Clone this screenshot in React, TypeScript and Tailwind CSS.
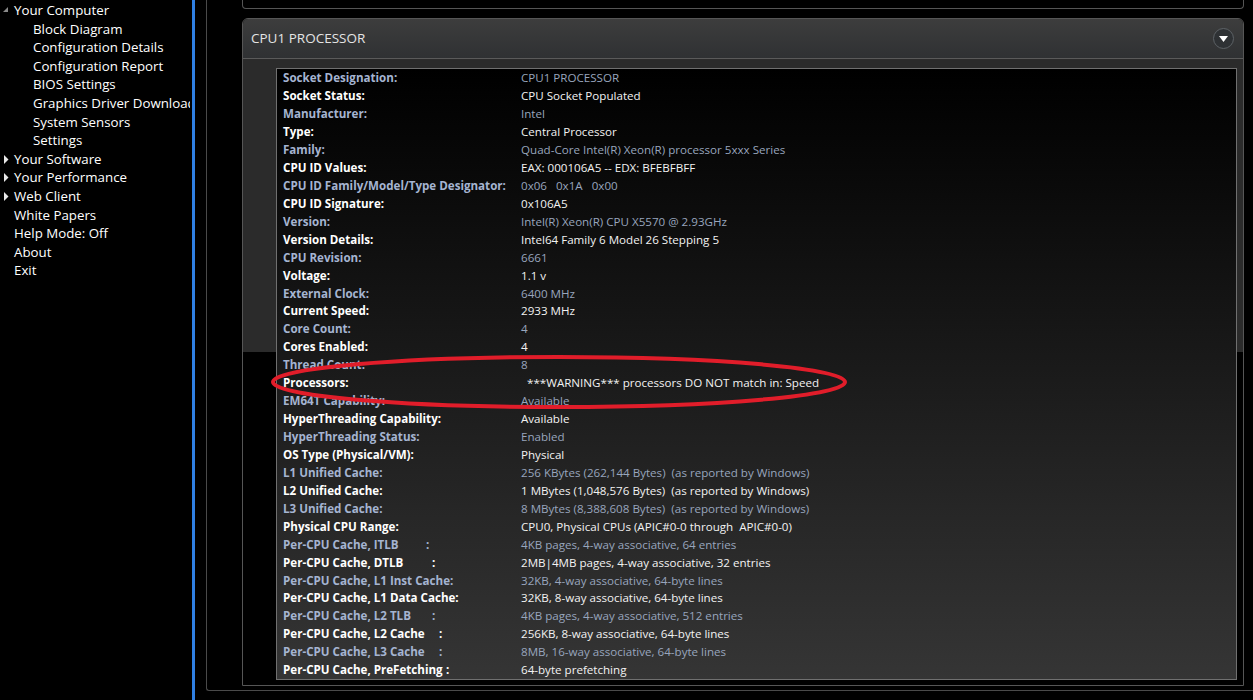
import React from 'react'

type Row = { label: string; value: string; colonW?: string }

// Rows of the processor detail table; odd rows are the blue-grey ones
const rows: Row[] = [
  { label: 'Socket Designation:', value: 'CPU1 PROCESSOR' },
  { label: 'Socket Status:', value: 'CPU Socket Populated' },
  { label: 'Manufacturer:', value: 'Intel' },
  { label: 'Type:', value: 'Central Processor' },
  { label: 'Family:', value: 'Quad-Core Intel(R) Xeon(R) processor 5xxx Series' },
  { label: 'CPU ID Values:', value: 'EAX: 000106A5 -- EDX: BFEBFBFF' },
  { label: 'CPU ID Family/Model/Type Designator:', value: '0x06   0x1A   0x00' },
  { label: 'CPU ID Signature:', value: '0x106A5' },
  { label: 'Version:', value: 'Intel(R) Xeon(R) CPU X5570 @ 2.93GHz' },
  { label: 'Version Details:', value: 'Intel64 Family 6 Model 26 Stepping 5' },
  { label: 'CPU Revision:', value: '6661' },
  { label: 'Voltage:', value: '1.1 v' },
  { label: 'External Clock:', value: '6400 MHz' },
  { label: 'Current Speed:', value: '2933 MHz' },
  { label: 'Core Count:', value: '4' },
  { label: 'Cores Enabled:', value: '4' },
  { label: 'Thread Count:', value: '8' },
  { label: 'Processors:', value: '  ***WARNING*** processors DO NOT match in: Speed' },
  { label: 'EM64T Capability:', value: 'Available' },
  { label: 'HyperThreading Capability:', value: 'Available' },
  { label: 'HyperThreading Status:', value: 'Enabled' },
  { label: 'OS Type (Physical/VM):', value: 'Physical' },
  { label: 'L1 Unified Cache:', value: '256 KBytes (262,144 Bytes)  (as reported by Windows)' },
  { label: 'L2 Unified Cache:', value: '1 MBytes (1,048,576 Bytes)  (as reported by Windows)' },
  { label: 'L3 Unified Cache:', value: '8 MBytes (8,388,608 Bytes)  (as reported by Windows)' },
  { label: 'Physical CPU Range:', value: 'CPU0, Physical CPUs (APIC#0-0 through  APIC#0-0)' },
  { label: 'Per-CPU Cache, ITLB', colonW: 'w-[143px]', value: '4KB pages, 4-way associative, 64 entries' },
  { label: 'Per-CPU Cache, DTLB', colonW: 'w-[149px]', value: '2MB|4MB pages, 4-way associative, 32 entries' },
  { label: 'Per-CPU Cache, L1 Inst Cache:', value: '32KB, 4-way associative, 64-byte lines' },
  { label: 'Per-CPU Cache, L1 Data Cache:', value: '32KB, 8-way associative, 64-byte lines' },
  { label: 'Per-CPU Cache, L2 TLB', colonW: 'w-[149px]', value: '4KB pages, 4-way associative, 512 entries' },
  { label: 'Per-CPU Cache, L2 Cache', colonW: 'w-[156px]', value: '256KB, 8-way associative, 64-byte lines' },
  { label: 'Per-CPU Cache, L3 Cache', colonW: 'w-[156px]', value: '8MB, 16-way associative, 64-byte lines' },
  { label: 'Per-CPU Cache, PreFetching', colonW: 'w-[163px]', value: '64-byte prefetching' },
]

type NavItem = { text: string; child?: boolean; icon?: 'open' | 'closed' }

const nav: NavItem[] = [
  { text: 'Your Computer', icon: 'open' },
  { text: 'Block Diagram', child: true },
  { text: 'Configuration Details', child: true },
  { text: 'Configuration Report', child: true },
  { text: 'BIOS Settings', child: true },
  { text: 'Graphics Driver Download', child: true },
  { text: 'System Sensors', child: true },
  { text: 'Settings', child: true },
  { text: 'Your Software', icon: 'closed' },
  { text: 'Your Performance', icon: 'closed' },
  { text: 'Web Client', icon: 'closed' },
  { text: 'White Papers' },
  { text: 'Help Mode: Off' },
  { text: 'About' },
  { text: 'Exit' },
]

const NavIcon: React.FC<{ kind?: 'open' | 'closed' }> = ({ kind }) => {
  if (kind === 'open') {
    return (
      <svg width="6" height="6" viewBox="0 0 6 6" className="absolute left-[3px] top-[6px]">
        <path d="M5 0 L5 5 L0 5 Z" fill="#8a8a8a" />
      </svg>
    )
  }
  if (kind === 'closed') {
    return (
      <svg width="5" height="9" viewBox="0 0 5 9" className="absolute left-[4px] top-[5px]">
        <path d="M0 0 L4.5 4.5 L0 9 Z" fill="#e8e8e8" />
      </svg>
    )
  }
  return null
}

const Sidebar: React.FC = () => (
  <div className="w-[190px] shrink-0 overflow-hidden pt-[1px] font-['Open_Sans',sans-serif] text-[13.3px] text-white">
    {nav.map((item) => (
      <div
        key={item.text}
        className={`relative h-[18.6px] whitespace-nowrap leading-[18px] ${item.child ? 'pl-[33px]' : 'pl-[14px]'}`}
      >
        <NavIcon kind={item.icon} />
        {item.text}
      </div>
    ))}
  </div>
)

const App: React.FC = () => {
  return (
    <div className="relative flex h-[700px] w-[1253px] overflow-hidden bg-black">
      <Sidebar />

      {/* blue splitter */}
      <div className="ml-[2px] w-[3px] shrink-0 bg-[#2f7fe3]" />
      <div className="w-[11px] shrink-0" />

      {/* main frame */}
      <div className="flex h-[691px] flex-1 flex-col rounded-bl-[3px] border-b border-l border-[#4a4a4a] pl-[35px] pr-[9px]">
        {/* tail of the previous panel */}
        <div className="h-[9px] shrink-0 rounded-b-[4px] border-x border-b border-[#555]" />

        {/* CPU1 panel */}
        <div className="mt-[9px] flex h-[668px] flex-col overflow-hidden rounded-t-[6px] border border-[#565656]">
          <div className="flex h-[40px] shrink-0 items-center justify-between border-b border-[#5a5a5a] bg-[linear-gradient(to_bottom,#3d3d3d,#2f3133)] pl-[8px] pr-[9px]">
            <span className="font-['Open_Sans',sans-serif] text-[13.5px] text-[#e4e4e4]">CPU1 PROCESSOR</span>
            <div className="flex h-[21px] w-[21px] items-center justify-center rounded-full border-[1.5px] border-[#5d6266] bg-[#2e3134]">
              <svg width="9" height="6" viewBox="0 0 9 6">
                <path d="M0 0 L9 0 L4.5 6 Z" fill="#ffffff" />
              </svg>
            </div>
          </div>

          <div className="flex flex-1 flex-col bg-[linear-gradient(to_bottom,#2b2b2b_0,#2b2b2b_293px,#000_293px)] pb-[8px] pl-[33px] pr-[6px] pt-[9px]">
            <div className="flex-1 border border-[#707070] bg-[linear-gradient(to_bottom,#000,#353535)] pl-[6px] font-['Open_Sans',sans-serif] text-[11.6px]">
              {rows.map((row, i) => {
                const blue = i % 2 === 0
                return (
                  <div key={row.label} className="flex h-[17.94px] items-center whitespace-pre">
                    <div className={`w-[238px] shrink-0 font-bold ${blue ? 'text-[#a5b4d1]' : 'text-white'}`}>
                      {row.colonW ? (
                        <>
                          <span className={`inline-block ${row.colonW}`}>{row.label}</span>:
                        </>
                      ) : (
                        row.label
                      )}
                    </div>
                    <div className={blue ? 'text-[#98a5bd]' : 'text-[#f2f2f2]'}>{row.value}</div>
                  </div>
                )
              })}
            </div>
          </div>
        </div>
      </div>

      {/* red annotation drawn over the table */}
      <svg className="pointer-events-none absolute left-0 top-0" width="1253" height="700">
        <ellipse cx="559" cy="382" rx="286" ry="25" fill="none" stroke="#e11d2a" strokeWidth="4" />
      </svg>
    </div>
  )
}

export default App
